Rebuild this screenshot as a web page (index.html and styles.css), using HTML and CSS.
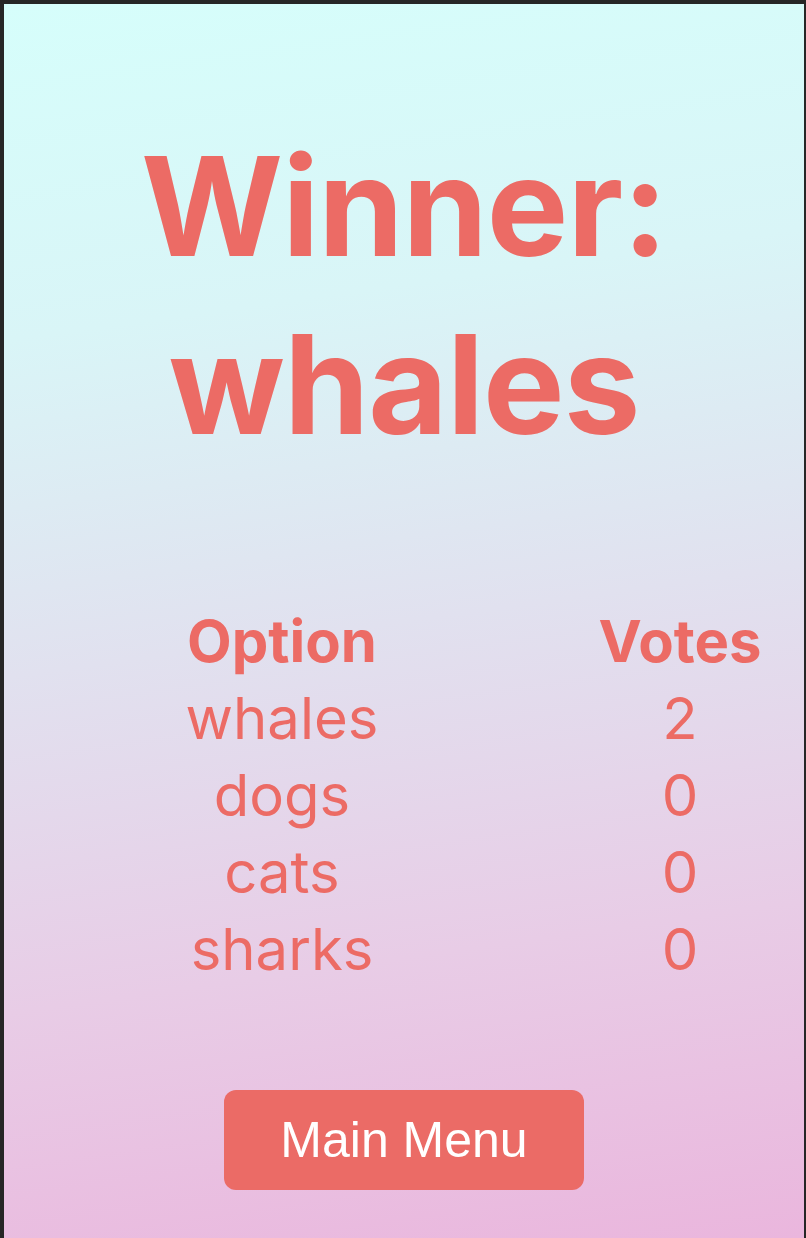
FILE: index.html
```html
<!DOCTYPE html>
<html lang="en">
<head>
<meta charset="utf-8">
<title>Results</title>
<link rel="stylesheet" href="styles.css">
</head>
<body>
<div class="frame">
  <main class="screen">
    <h1 class="winner">Winner:<br>whales</h1>
    <div class="results">
      <div class="cell head">Option</div>
      <div class="cell head">Votes</div>
      <div class="cell">whales</div>
      <div class="cell">2</div>
      <div class="cell">dogs</div>
      <div class="cell">0</div>
      <div class="cell">cats</div>
      <div class="cell">0</div>
      <div class="cell">sharks</div>
      <div class="cell">0</div>
    </div>
    <div class="actions">
      <button class="menu-btn" type="button">Main Menu</button>
    </div>
  </main>
</div>
</body>
</html>
```

FILE: styles.css
```css
html, body {
  margin: 0;
  padding: 0;
  height: 100%;
}
body {
  background: #262626;
}
.frame {
  box-sizing: border-box;
  height: 1238px;
  padding: 4px 2px 0 4px;
  background: #262626;
}
.screen {
  box-sizing: border-box;
  height: 100%;
  background: linear-gradient(172deg, #d6fefb 0%, #d9f5f7 25%, #e1e1ef 50%, #e8cce6 75%, #eab6dd 100%);
  font-family: Inter, "Noto Sans", sans-serif;
  color: #ec6b65;
  padding-top: 113px;
  overflow: hidden;
}
.winner {
  margin: 0;
  font-size: 137px;
  font-weight: 700;
  line-height: 178px;
  text-align: center;
  letter-spacing: -1px;
}
.results {
  display: grid;
  grid-template-columns: 200px 200px;
  column-gap: 198px;
  margin: 130px 0 0 178px;
  font-size: 58px;
  line-height: 77px;
}
.cell {
  text-align: center;
}
.cell.head {
  font-weight: 700;
}
.actions {
  display: flex;
  justify-content: center;
  margin-top: 102px;
}
.menu-btn {
  width: 360px;
  height: 100px;
  border: none;
  border-radius: 12px;
  background: #eb6b66;
  color: #ffffff;
  font-family: "Liberation Sans", Arial, sans-serif;
  font-size: 50px;
  padding: 0;
}
```
